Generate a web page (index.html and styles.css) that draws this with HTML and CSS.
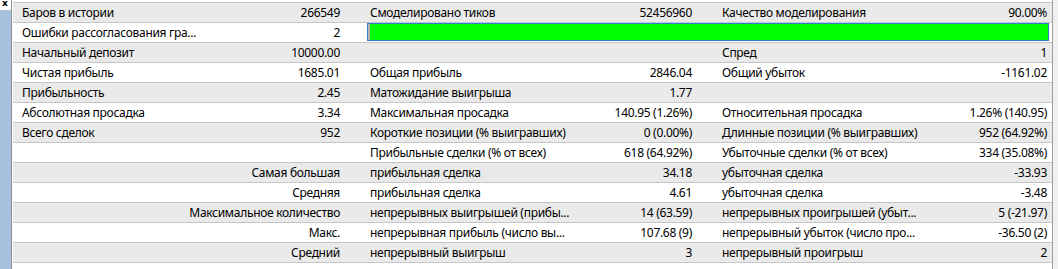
FILE: index.html
```html
<!DOCTYPE html>
<html lang="ru">
<head>
<meta charset="utf-8">
<link rel="stylesheet" href="styles.css">
</head>
<body>
<div class="sidebar">
  <div class="close">x</div>
  <div class="fill"></div>
</div>
<div class="list">
  <div class="grid">
    <div class="row odd"><span class="l">Баров в истории</span><span class="v">266549</span><span class="l l2">Смоделировано тиков</span><span class="v">52456960</span><span class="l l2">Качество моделирования</span><span class="v v3">90.00%</span></div>
    <div class="row"><span class="l">Ошибки рассогласования гра...</span><span class="v">2</span><span class="barcell"><span class="bar"></span></span></div>
    <div class="row odd"><span class="l">Начальный депозит</span><span class="v">10000.00</span><span class="l l2"></span><span class="v"></span><span class="l l2">Спред</span><span class="v v3">1</span></div>
    <div class="row"><span class="l">Чистая прибыль</span><span class="v">1685.01</span><span class="l l2">Общая прибыль</span><span class="v">2846.04</span><span class="l l2">Общий убыток</span><span class="v v3">-1161.02</span></div>
    <div class="row odd"><span class="l">Прибыльность</span><span class="v">2.45</span><span class="l l2">Матожидание выигрыша</span><span class="v">1.77</span><span class="l l2"></span><span class="v v3"></span></div>
    <div class="row"><span class="l">Абсолютная просадка</span><span class="v">3.34</span><span class="l l2">Максимальная просадка</span><span class="v">140.95 (1.26%)</span><span class="l l2">Относительная просадка</span><span class="v v3">1.26% (140.95)</span></div>
    <div class="row odd"><span class="l">Всего сделок</span><span class="v">952</span><span class="l l2">Короткие позиции (% выигравших)</span><span class="v">0 (0.00%)</span><span class="l l2">Длинные позиции (% выигравших)</span><span class="v v3">952 (64.92%)</span></div>
    <div class="row"><span class="span2"></span><span class="l l2">Прибыльные сделки (% от всех)</span><span class="v">618 (64.92%)</span><span class="l l2">Убыточные сделки (% от всех)</span><span class="v v3">334 (35.08%)</span></div>
    <div class="row odd"><span class="span2">Самая большая</span><span class="l l2">прибыльная сделка</span><span class="v">34.18</span><span class="l l2">убыточная сделка</span><span class="v v3">-33.93</span></div>
    <div class="row"><span class="span2">Средняя</span><span class="l l2">прибыльная сделка</span><span class="v">4.61</span><span class="l l2">убыточная сделка</span><span class="v v3">-3.48</span></div>
    <div class="row odd"><span class="span2">Максимальное количество</span><span class="l l2">непрерывных выигрышей (прибы...</span><span class="v">14 (63.59)</span><span class="l l2">непрерывных проигрышей (убыт...</span><span class="v v3">5 (-21.97)</span></div>
    <div class="row"><span class="span2">Макс.</span><span class="l l2">непрерывная прибыль (число вы...</span><span class="v">107.68 (9)</span><span class="l l2">непрерывный убыток (число про...</span><span class="v v3">-36.50 (2)</span></div>
    <div class="row odd"><span class="span2">Средний</span><span class="l l2">непрерывный выигрыш</span><span class="v">3</span><span class="l l2">непрерывный проигрыш</span><span class="v v3">2</span></div>
  </div>
</div>
</body>
</html>
```

FILE: styles.css
```css
html, body {
  margin: 0;
  padding: 0;
}
body {
  width: 1058px;
  height: 269px;
  overflow: hidden;
  display: flex;
  background: #f0f0f0;
  font-family: "Noto Sans", "Open Sans", sans-serif;
  font-size: 12px;
  letter-spacing: -0.3px;
  color: #000;
}
.sidebar {
  width: 11px;
  border-right: 1px solid #8e8e8e;
  display: flex;
  flex-direction: column;
}
.close {
  height: 10px;
  background: #fff;
  font-family: "DejaVu Sans", sans-serif;
  font-weight: bold;
  font-size: 9px;
  line-height: 7px;
  letter-spacing: 0;
  padding-left: 2px;
  color: #000;
}
.fill {
  flex: 1;
  background: #a8c2de;
}
.list {
  flex: 1;
  margin-right: 5px;
  border-left: 1px solid #fff;
  border-right: 1px solid #a0a0a0;
  background: #fff;
  padding-top: 2px;
}
.grid {
  border-top: 1px solid #c6c6c6;
}
.row {
  display: grid;
  grid-template-columns: 190px 143px 264px 88px 262px 1fr;
  height: 19px;
  border-bottom: 1px solid #c6c6c6;
  align-items: center;
  background: #fff;
  white-space: nowrap;
}
.row.odd {
  background: #eaeaea;
}
.l {
  padding-left: 9px;
}
.l2 {
  padding-left: 24px;
}
.v {
  text-align: right;
  padding-right: 6px;
}
.v3 {
  padding-right: 5px;
}
.span2 {
  grid-column: span 2;
  text-align: right;
  padding-right: 6px;
}
.barcell {
  grid-column: 3 / 7;
  align-self: start;
  padding: 0 3px 0 21px;
}
.bar {
  display: block;
  height: 18px;
  box-sizing: border-box;
  border: 1px solid #2b7fd6;
  background: #00ff00;
  box-shadow: inset 2px 0 0 #b4b4b4;
}
```
